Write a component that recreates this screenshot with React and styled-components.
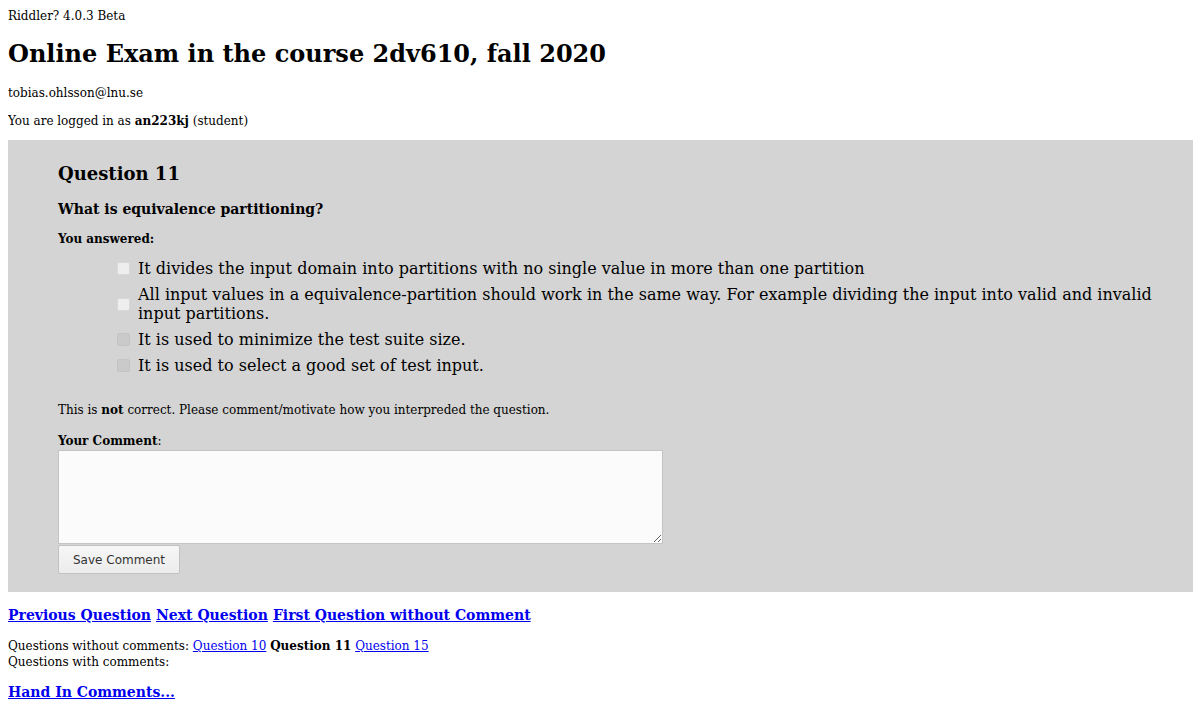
import React from "react";
import styled, { createGlobalStyle } from "styled-components";

const GlobalStyle = createGlobalStyle`
  body {
    margin: 8px;
    font-family: "DejaVu Serif", serif;
    font-size: 13.33px;
    font-stretch: condensed;
    color: #000;
    background: #fff;
  }
`;

const Version = styled.div`
  line-height: 15px;
`;

const Title = styled.h1`
  font-size: 24px;
  font-weight: bold;
  font-stretch: normal;
  margin: 17px 0 0;
  line-height: 28px;
`;

const Small = styled.p`
  margin: ${(p) => p.gap}px 0 0;
  line-height: 16px;
`;

const Panel = styled.div`
  background: #d4d4d4;
  padding: 23px 25px 18px 50px;
  margin-top: 11px;
`;

const QuestionTitle = styled.h2`
  font-size: 18px;
  font-stretch: normal;
  margin: 0;
  line-height: 22px;
`;

const QuestionText = styled.h3`
  font-size: 14px;
  font-stretch: normal;
  margin: 15px 0 0;
  line-height: 18px;
`;

const Label = styled.div`
  font-weight: bold;
  line-height: 16px;
  margin-top: 12px;
`;

const Options = styled.ul`
  list-style: none;
  margin: 13px 0 26px;
  padding: 0 0 0 59px;
  font-size: 16px;
  font-stretch: normal;
  line-height: 19px;
`;

const Option = styled.li`
  display: flex;
  align-items: center;
  gap: 8px;
  margin-bottom: 7px;
`;

const Box = styled.span`
  flex: 0 0 13px;
  width: 13px;
  height: 13px;
  box-sizing: border-box;
  border-radius: 2px;
  border: 1px solid ${(p) => (p.dim ? "#c4c4c4" : "#d9d9d9")};
  background: ${(p) => (p.dim ? "#cacaca" : "#eeeeee")};
`;

const Feedback = styled.p`
  margin: 0;
  line-height: 16px;
`;

const CommentLabel = styled.div`
  line-height: 16px;
  margin: 14px 0 1px;
`;

const TextArea = styled.textarea`
  display: block;
  width: 605px;
  height: 94px;
  box-sizing: border-box;
  border: 1px solid #c4c4c4;
  background: #fbfbfb;
  margin: 0;
`;

const Button = styled.button`
  display: block;
  margin-top: 1px;
  height: 29px;
  padding: 0 14px;
  font-family: "DejaVu Sans", sans-serif;
  font-size: 12px;
  color: #333;
  background: linear-gradient(#f6f6f6, #ececec);
  border: 1px solid #c2c2c2;
  border-radius: 2px;
`;

const NavLinks = styled.div`
  margin-top: 14px;
  font-size: 14px;
  font-stretch: normal;
  font-weight: bold;
  line-height: 18px;
  display: flex;
  gap: 5px;
`;

const Link = styled.a`
  color: #0000ee;
  text-decoration: underline;
`;

const Lines = styled.div`
  margin-top: 13px;
  line-height: 16px;
`;

const HandIn = styled.div`
  margin-top: 13px;
  font-size: 14px;
  font-stretch: normal;
  font-weight: bold;
  line-height: 18px;
`;

const answers = [
  { text: "It divides the input domain into partitions with no single value in more than one partition" },
  { text: "All input values in a equivalence-partition should work in the same way. For example dividing the input into valid and invalid input partitions." },
  { text: "It is used to minimize the test suite size.", dim: true },
  { text: "It is used to select a good set of test input.", dim: true },
];

export default function App() {
  return (
    <>
      <GlobalStyle />
      <Version>Riddler? 4.0.3 Beta</Version>
      <Title>Online Exam in the course 2dv610, fall 2020</Title>
      <Small gap={17}>tobias.ohlsson@lnu.se</Small>
      <Small gap={11}>
        You are logged in as <b>an223kj</b> (student)
      </Small>
      <Panel>
        <QuestionTitle>Question 11</QuestionTitle>
        <QuestionText>What is equivalence partitioning?</QuestionText>
        <Label>You answered:</Label>
        <Options>
          {answers.map((a, i) => (
            <Option key={i}>
              <Box dim={a.dim} />
              <span>{a.text}</span>
            </Option>
          ))}
        </Options>
        <Feedback>
          This is <b>not</b> correct. Please comment/motivate how you interpreded the question.
        </Feedback>
        <CommentLabel>
          <b>Your Comment</b>:
        </CommentLabel>
        <TextArea />
        <Button>Save Comment</Button>
      </Panel>
      <NavLinks>
        <Link href="#">Previous Question</Link>
        <Link href="#">Next Question</Link>
        <Link href="#">First Question without Comment</Link>
      </NavLinks>
      <Lines>
        Questions without comments: <Link href="#">Question 10</Link> <b>Question 11</b>{" "}
        <Link href="#">Question 15</Link>
        <br />
        Questions with comments:
      </Lines>
      <HandIn>
        <Link href="#">Hand In Comments...</Link>
      </HandIn>
    </>
  );
}
